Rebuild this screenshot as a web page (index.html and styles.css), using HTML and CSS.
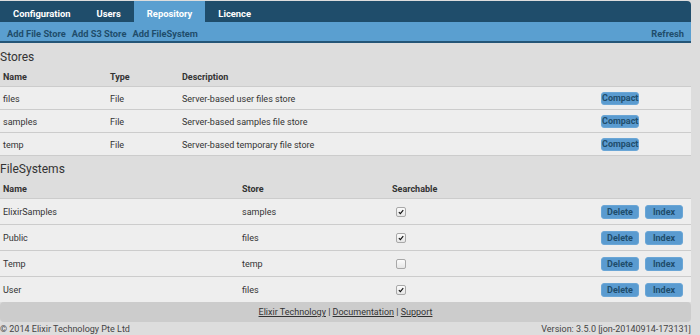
FILE: index.html
```html
<!DOCTYPE html>
<html>
<head>
<meta charset="utf-8">
<link rel="stylesheet" href="styles.css">
</head>
<body>
<div class="page">
  <nav class="tabs">
    <a class="tab">Configuration</a>
    <a class="tab">Users</a>
    <a class="tab active">Repository</a>
    <a class="tab">Licence</a>
  </nav>
  <div class="subbar">
    <div class="sublinks">
      <a>Add File Store</a>
      <a>Add S3 Store</a>
      <a>Add FileSystem</a>
    </div>
    <a>Refresh</a>
  </div>

  <h2 class="section">Stores</h2>
  <table class="grid stores">
    <colgroup><col class="c-name"><col class="c-type"><col class="c-desc"><col class="c-act"></colgroup>
    <thead><tr><th>Name</th><th>Type</th><th>Description</th><th></th></tr></thead>
    <tbody>
      <tr><td>files</td><td>File</td><td>Server-based user files store</td><td class="act"><div class="btns"><span class="btn small">Compact</span></div></td></tr>
      <tr><td>samples</td><td>File</td><td>Server-based samples file store</td><td class="act"><div class="btns"><span class="btn small">Compact</span></div></td></tr>
      <tr><td>temp</td><td>File</td><td>Server-based temporary file store</td><td class="act"><div class="btns"><span class="btn small">Compact</span></div></td></tr>
    </tbody>
  </table>

  <h2 class="section fs">FileSystems</h2>
  <table class="grid filesystems">
    <colgroup><col class="f-name"><col class="f-store"><col class="f-search"><col class="c-act"></colgroup>
    <thead><tr><th>Name</th><th>Store</th><th>Searchable</th><th></th></tr></thead>
    <tbody>
      <tr><td>ElixirSamples</td><td>samples</td><td><span class="check on"><svg viewBox="0 0 10 10"><path d="M2.3 5.2 L4.2 7.1 L7.8 2.6"/></svg></span></td><td class="act"><div class="btns"><span class="btn">Delete</span><span class="btn">Index</span></div></td></tr>
      <tr><td>Public</td><td>files</td><td><span class="check on"><svg viewBox="0 0 10 10"><path d="M2.3 5.2 L4.2 7.1 L7.8 2.6"/></svg></span></td><td class="act"><div class="btns"><span class="btn">Delete</span><span class="btn">Index</span></div></td></tr>
      <tr><td>Temp</td><td>temp</td><td><span class="check"></span></td><td class="act"><div class="btns"><span class="btn">Delete</span><span class="btn">Index</span></div></td></tr>
      <tr class="last"><td>User</td><td>files</td><td><span class="check on"><svg viewBox="0 0 10 10"><path d="M2.3 5.2 L4.2 7.1 L7.8 2.6"/></svg></span></td><td class="act"><div class="btns"><span class="btn">Delete</span><span class="btn">Index</span></div></td></tr>
    </tbody>
  </table>

  <footer class="footer">
    <a>Elixir Technology</a> | <a>Documentation</a> | <a>Support</a>
  </footer>
  <div class="bottom">
    <span>© 2014 Elixir Technology Pte Ltd</span>
    <span>Version: 3.5.0 [jon-20140914-173131]</span>
  </div>
</div>
</body>
</html>
```
FILE: styles.css
```css
html, body {
  margin: 0;
  padding: 0;
  background: #dddddd;
}
body {
  font-family: Roboto, "Liberation Sans", sans-serif;
  font-size: 9px;
  color: #333333;
}
.page {
  width: 691px;
  padding-top: 1px;
}
.tabs {
  display: flex;
  background: #1f4d6b;
  border-top-right-radius: 4px;
  height: 21px;
}
.tab {
  padding: 5px 13px 0;
  line-height: 16px;
  font-weight: bold;
  font-size: 9.4px;
  color: #ffffff;
}
.tab.active {
  background: #5a9fd0;
}
.subbar {
  display: flex;
  justify-content: space-between;
  background: #5a9fd0;
  border-bottom: 2px solid #245577;
  padding: 4px 7px 0;
  height: 19px;
  box-sizing: border-box;
  height: 21px;
  line-height: 15px;
}
.subbar a {
  font-weight: bold;
  font-size: 9.3px;
  color: #1f4d6b;
}
.sublinks {
  display: flex;
  gap: 6px;
}
.section {
  margin: 6px 0 0;
  font-size: 12px;
  font-weight: normal;
  line-height: 16px;
  color: #333333;
}
.section.fs {
  margin-top: 5px;
}
.grid {
  width: 691px;
  border-collapse: collapse;
  table-layout: fixed;
}
.c-name { width: 107px; }
.c-type { width: 72px; }
.c-desc { width: 419px; }
.c-act { width: 93px; }
.f-name { width: 239px; }
.f-store { width: 150px; }
.f-search { width: 209px; }
.grid th {
  text-align: left;
  font-weight: bold;
  padding: 4px 0 0 3px;
  line-height: 17px;
  color: #333333;
}
.grid td {
  background: #eeeeee;
  border-top: 1px solid #cccccc;
  border-bottom: 1px solid #cccccc;
  padding: 2px 0 0 3px;
  line-height: 20px;
  white-space: nowrap;
}
.filesystems td {
  padding-top: 1px;
  line-height: 24px;
}
.filesystems tr.last td {
  border-bottom: none;
}
.grid td.act {
  padding: 0 0 0 3px;
}
.btns {
  display: flex;
  align-items: center;
  gap: 6px;
  height: 22px;
}
.filesystems .btns {
  height: 25px;
}
.btn {
  display: block;
  width: 38px;
  height: 14px;
  box-sizing: border-box;
  background: #5a9bd0;
  border: 1px solid #6aa6d6;
  border-radius: 3px;
  color: #1f4d6b;
  font-weight: bold;
  font-size: 9px;
  line-height: 12px;
  text-align: center;
}
.btn.small {
  height: 13px;
  line-height: 11px;
  letter-spacing: 0;
  overflow: visible;
}
.check {
  display: inline-block;
  vertical-align: middle;
  margin: -2px 0 0 4px;
  width: 10px;
  height: 10px;
  box-sizing: border-box;
  border: 1px solid #a8a8a8;
  border-radius: 2px;
  background: linear-gradient(#fbfbfb, #e6e6e6);
}
.check svg {
  display: block;
  width: 8px;
  height: 8px;
  fill: none;
  stroke: #111111;
  stroke-width: 1.4;
}
.footer {
  background: #cccccc;
  border-radius: 4px;
  height: 20px;
  box-sizing: border-box;
  padding-top: 1px;
  line-height: 19px;
  text-align: center;
  color: #333333;
}
.footer a {
  color: #333333;
  text-decoration: underline;
}
.bottom {
  display: flex;
  justify-content: space-between;
  line-height: 14px;
  color: #444444;
}
```
